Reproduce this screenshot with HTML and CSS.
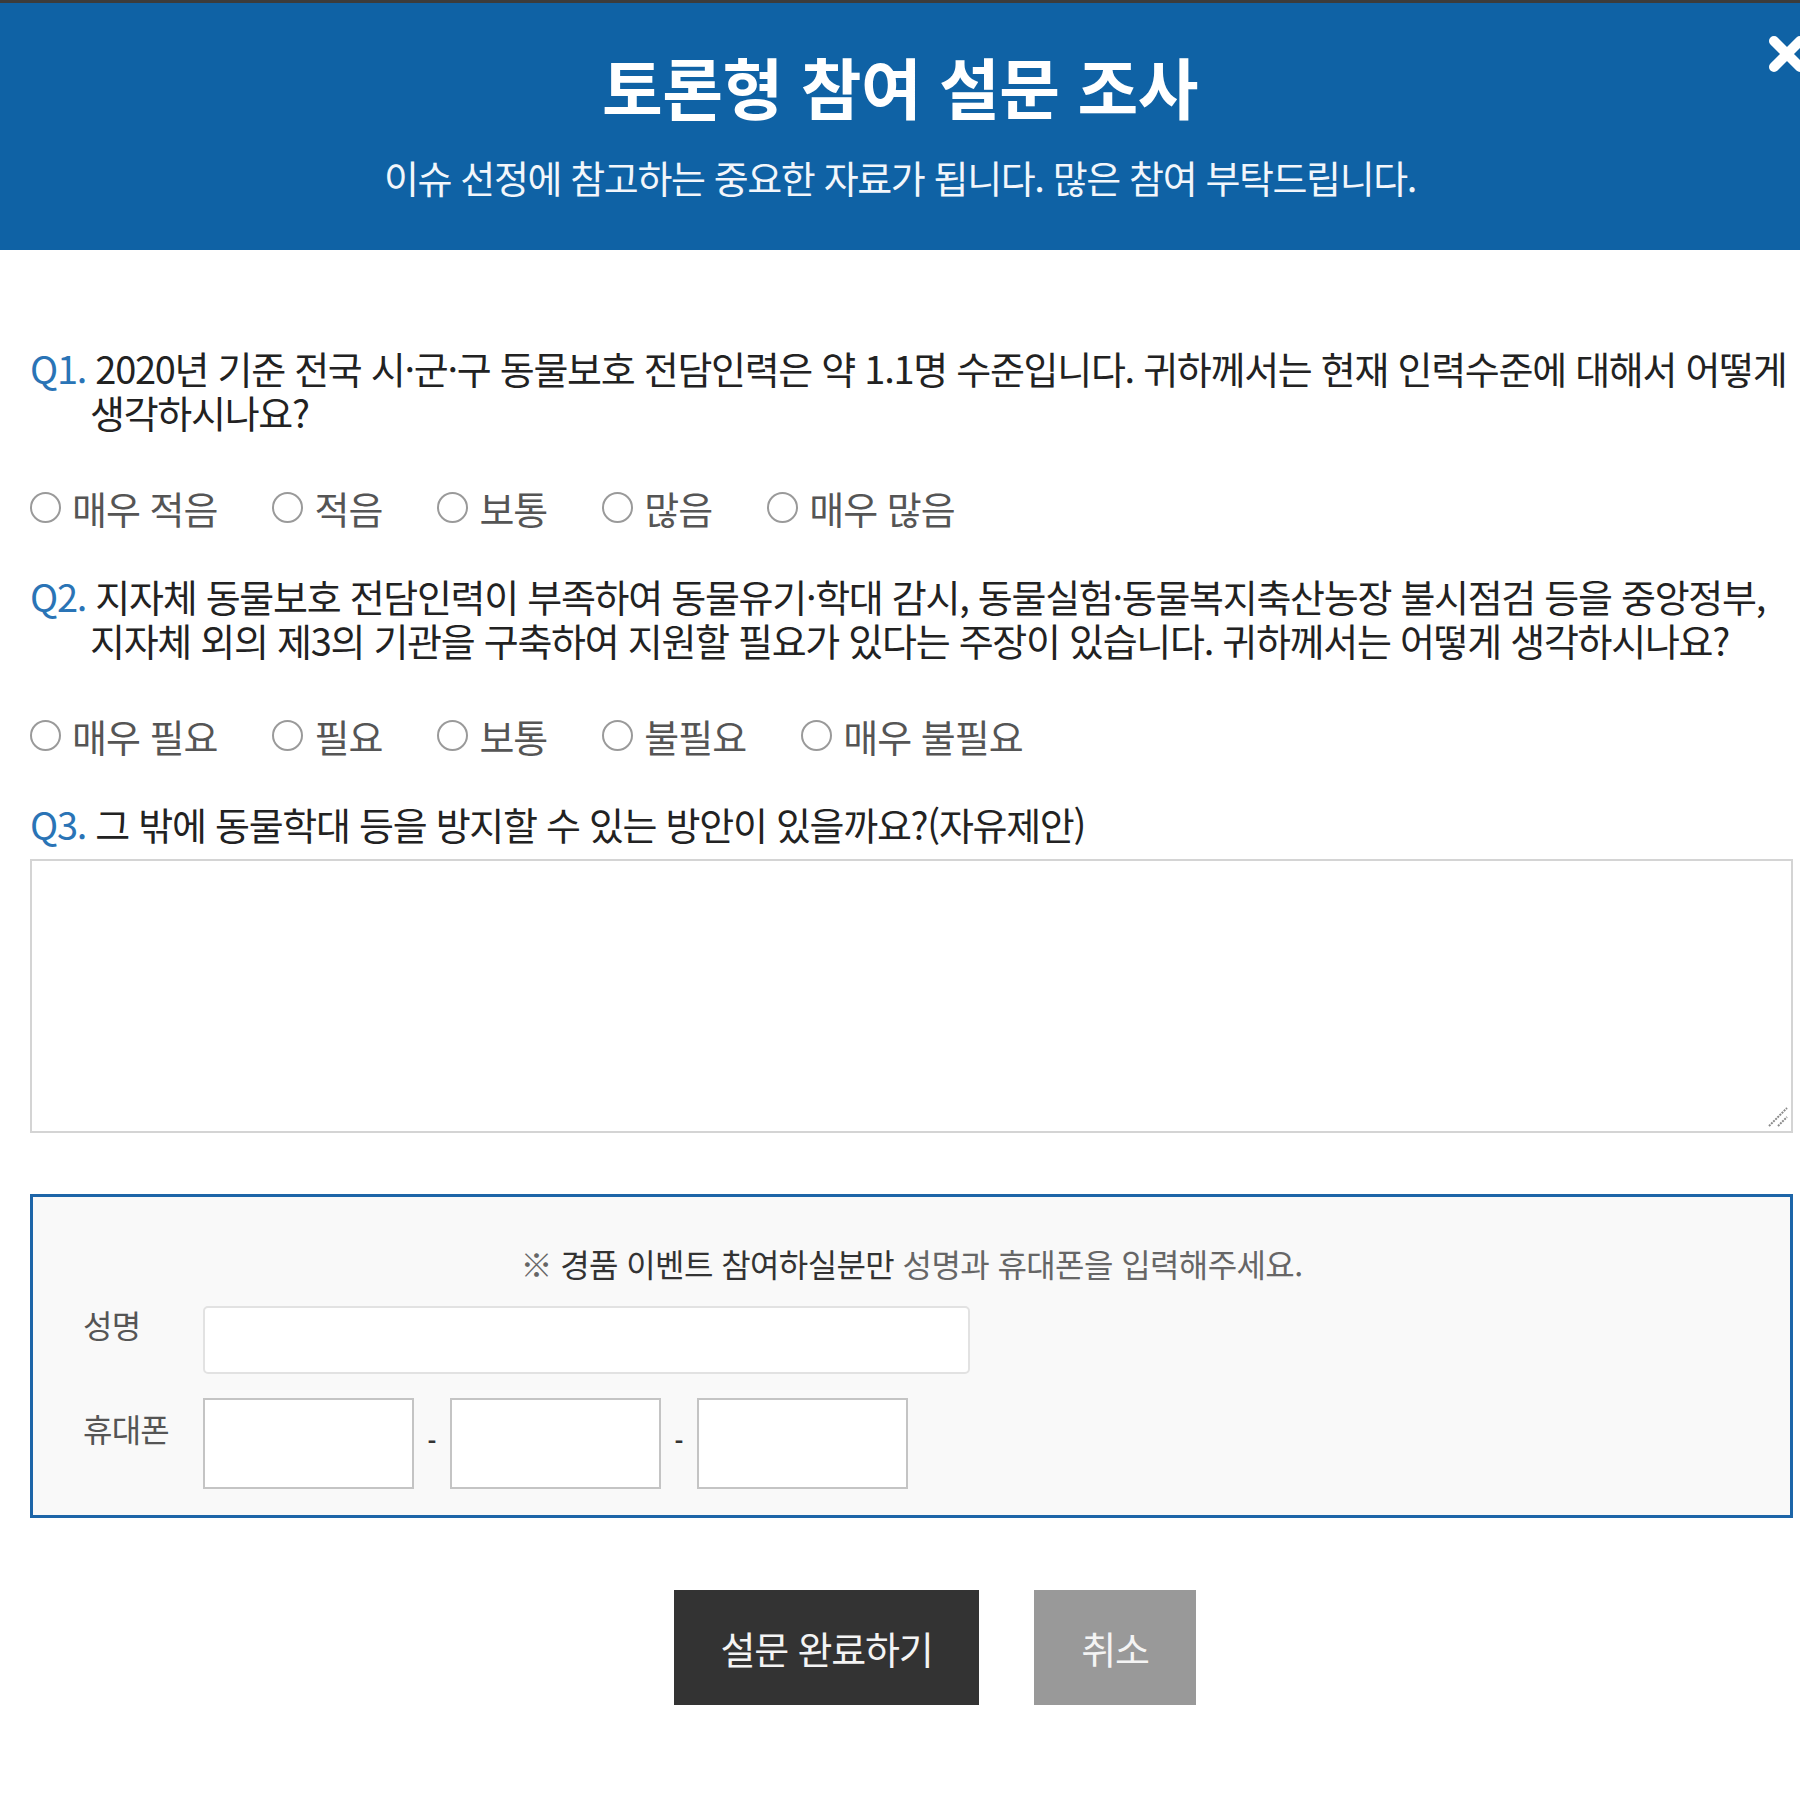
FILE: index.html
```html
<!DOCTYPE html>
<html lang="ko">
<head>
  <meta charset="UTF-8" />
  <meta name="viewport" content="width=device-width, initial-scale=1.0"/>
  <title>토론형 참여 설문 조사</title>
  <link rel="stylesheet" href="styles.css">
</head>
<body>
  <div class="topline"></div>
  <div class="header">
    <h1>토론형 참여 설문 조사</h1>
    <p>이슈 선정에 참고하는 중요한 자료가 됩니다. 많은 참여 부탁드립니다.</p>
    <button type="button" class="close-btn" aria-label="닫기">
      <svg width="44" height="44" viewBox="0 0 44 44">
        <path d="M9 9 L35 35 M35 9 L9 35" stroke="#fff" stroke-width="10" stroke-linecap="round" fill="none"/>
      </svg>
    </button>
  </div>

  <main>
    <form class="survey-form">
      <div class="question">
        <p class="q-title"><span class="q-num">Q1.</span> 2020년 기준 전국 시·군·구 동물보호 전담인력은 약 1.1명 수준입니다. 귀하께서는 현재 인력수준에 대해서 어떻게 생각하시나요?</p>
        <div class="options">
          <label><input type="radio" name="q1" value="1"> 매우 적음</label>
          <label><input type="radio" name="q1" value="2"> 적음</label>
          <label><input type="radio" name="q1" value="3"> 보통</label>
          <label><input type="radio" name="q1" value="4"> 많음</label>
          <label><input type="radio" name="q1" value="5"> 매우 많음</label>
        </div>
      </div>

      <div class="question">
        <p class="q-title"><span class="q-num">Q2.</span> 지자체 동물보호 전담인력이 부족하여 동물유기·학대 감시, 동물실험·동물복지축산농장 불시점검 등을 중앙정부, 지자체 외의 제3의 기관을 구축하여 지원할 필요가 있다는 주장이 있습니다. 귀하께서는 어떻게 생각하시나요?</p>
        <div class="options">
          <label><input type="radio" name="q2" value="1"> 매우 필요</label>
          <label><input type="radio" name="q2" value="2"> 필요</label>
          <label><input type="radio" name="q2" value="3"> 보통</label>
          <label><input type="radio" name="q2" value="4"> 불필요</label>
          <label><input type="radio" name="q2" value="5"> 매우 불필요</label>
        </div>
      </div>

      <div class="question">
        <p class="q-title"><span class="q-num">Q3.</span> 그 밖에 동물학대 등을 방지할 수 있는 방안이 있을까요?(자유제안)</p>
        <div class="answer-wrap">
          <textarea name="q3" class="free-answer"></textarea>
          <svg class="grip" width="22" height="22" viewBox="0 0 22 22">
            <path d="M2 20 L20 2 M11 20 L20 11" stroke="#8a8a8a" stroke-width="2" stroke-dasharray="2 1" fill="none"/>
          </svg>
        </div>
      </div>

      <div class="event-box">
        <p class="event-notice">※ <strong>경품 이벤트 참여하실분만</strong> 성명과 휴대폰을 입력해주세요.</p>
        <div class="event-row">
          <label for="name">성명</label>
          <input type="text" id="name" name="name" class="name-input" />
        </div>
        <div class="event-row">
          <label for="phone1">휴대폰</label>
          <div class="phone-group">
            <input type="tel" id="phone1" name="phone1" maxlength="3" />
            <span class="dash">-</span>
            <input type="tel" name="phone2" maxlength="4" />
            <span class="dash">-</span>
            <input type="tel" name="phone3" maxlength="4" />
          </div>
        </div>
      </div>

      <div class="btn-row">
        <button type="submit" class="btn btn-submit">설문 완료하기</button>
        <button type="button" class="btn btn-cancel">취소</button>
      </div>
    </form>
  </main>
</body>
</html>
```

FILE: styles.css
```css
* {
  margin: 0;
  padding: 0;
  box-sizing: border-box;
  font-family: 'Noto Sans CJK KR', 'Noto Sans', sans-serif;
}

body {
  background: #fff;
  overflow-x: hidden;
}

.topline {
  height: 3px;
  background: #3c3c3c;
}

.header {
  position: relative;
  height: 247px;
  background: #0f62a5;
  color: #fff;
  text-align: center;
  overflow: hidden;
}

.header h1 {
  padding-top: 40px;
  font-size: 66px;
  line-height: 84px;
  font-weight: bold;
  letter-spacing: -0.5px;
}

.header p {
  margin-top: 27px;
  font-size: 38px;
  line-height: 46px;
  letter-spacing: -1.4px;
  color: #f2f6fb;
}

.close-btn {
  position: absolute;
  top: 29px;
  right: -9px;
  background: none;
  border: none;
  cursor: pointer;
}

.close-btn svg {
  display: block;
}

main {
  padding: 0 7px 0 30px;
}

.question {
  margin-top: 45px;
}

.question:first-child {
  margin-top: 96px;
}

.q-title {
  padding-left: 60px;
  text-indent: -60px;
  font-size: 38px;
  line-height: 44px;
  letter-spacing: -1.3px;
  color: #222;
}

.q-num {
  color: #2a74b6;
}

.options {
  display: flex;
  margin-top: 51px;
  height: 44px;
  align-items: center;
}

.options label {
  display: flex;
  align-items: center;
  margin-right: 55px;
  font-size: 38px;
  letter-spacing: -1px;
  color: #555;
  cursor: pointer;
}

.options input[type="radio"] {
  appearance: none;
  width: 31px;
  height: 31px;
  margin-right: 11px;
  border: 2px solid #9a9a9a;
  border-radius: 50%;
  background: #fff;
}

.options input[type="radio"]:checked {
  background: radial-gradient(circle, #2a74b6 45%, #fff 50%);
}

.answer-wrap {
  position: relative;
  margin-top: 13px;
}

.free-answer {
  display: block;
  width: 100%;
  height: 274px;
  border: 2px solid #d4d4d4;
  font-size: 30px;
  padding: 10px;
  resize: none;
}

.grip {
  position: absolute;
  right: 4px;
  bottom: 5px;
  pointer-events: none;
}

.event-box {
  margin-top: 61px;
  height: 324px;
  padding: 47px 0 24px 50px;
  border: 3px solid #1d65a8;
  background: #f9f9f9;
}

.event-notice {
  margin-left: -50px;
  text-align: center;
  font-size: 32px;
  line-height: 38px;
  letter-spacing: -0.6px;
  color: #666;
}

.event-notice strong {
  font-weight: normal;
  color: #333;
}

.event-row {
  display: flex;
  align-items: center;
  margin-top: 24px;
}

.event-row label {
  width: 120px;
  padding-bottom: 32px;
  font-size: 32px;
  line-height: 36px;
  letter-spacing: -0.8px;
  color: #555;
}

.name-input {
  width: 767px;
  height: 68px;
  border: 2px solid #e2e2e2;
  border-radius: 5px;
  background: #fff;
  font-size: 28px;
  padding: 0 12px;
}

.phone-group {
  display: flex;
  align-items: center;
}

.phone-group input {
  width: 211px;
  height: 91px;
  border: 2px solid #c4c4c4;
  background: #fff;
  font-size: 28px;
  padding: 0 12px;
}

.dash {
  width: 36px;
  padding-bottom: 6px;
  text-align: center;
  font-size: 24px;
  font-weight: bold;
  color: #333;
}

.btn-row {
  display: flex;
  justify-content: center;
  gap: 55px;
  margin-top: 72px;
  padding-left: 47px;
}

.btn {
  height: 115px;
  border: none;
  color: #f4f4f4;
  font-size: 38px;
  letter-spacing: -1.2px;
  cursor: pointer;
}

.btn-submit {
  width: 305px;
  background: #333;
}

.btn-cancel {
  width: 162px;
  background: #999;
}
```
